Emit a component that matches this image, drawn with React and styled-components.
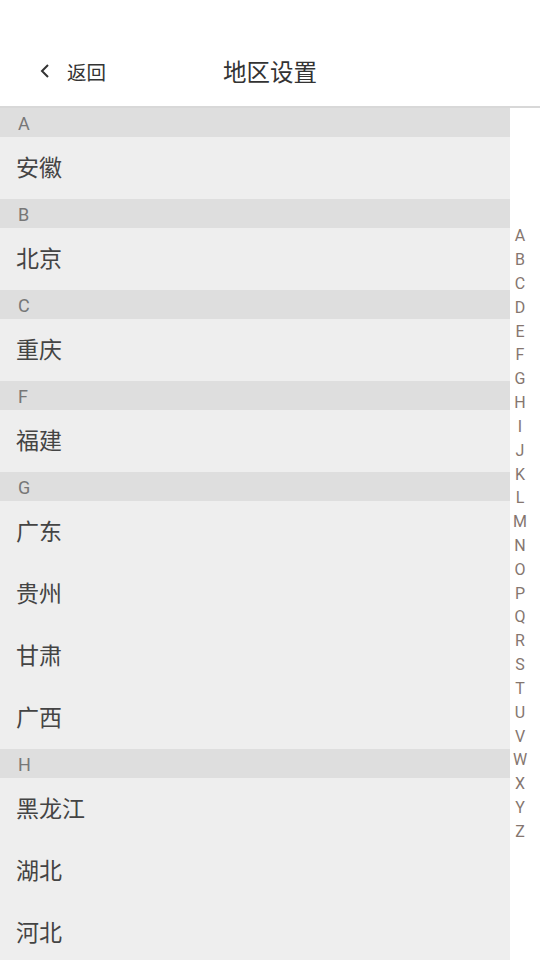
import React from 'react';
import styled, { createGlobalStyle } from 'styled-components';

const GlobalStyle = createGlobalStyle`
  html, body {
    margin: 0;
    padding: 0;
    background: #ffffff;
    font-family: Roboto, "Noto Sans CJK SC", sans-serif;
  }
`;

const Page = styled.div`
  width: 540px;
  height: 960px;
  display: flex;
  flex-direction: column;
  overflow: hidden;
  background: #fff;
`;

const Header = styled.header`
  position: relative;
  height: 66px;
  padding-top: 40px;
  display: flex;
  align-items: center;
  justify-content: center;
  border-bottom: 2px solid #d8d8d8;
  flex-shrink: 0;
`;

const BackButton = styled.div`
  position: absolute;
  left: 39px;
  top: 38px;
  height: 66px;
  display: flex;
  align-items: center;
  gap: 16px;
  color: #333;
  font-size: 19.5px;
`;

const Title = styled.h1`
  margin: 0 0 4px;
  font-size: 23.5px;
  font-weight: 400;
  color: #333;
`;

const Body = styled.div`
  flex: 1;
  display: flex;
  min-height: 0;
`;

const List = styled.div`
  width: 510px;
  background: #eeeeee;
  overflow: hidden;
`;

const SectionHead = styled.div`
  height: 29px;
  line-height: 31px;
  padding-left: 18px;
  background: #dedede;
  color: #777;
  font-size: 18px;
`;

const Item = styled.div`
  height: 62px;
  box-sizing: border-box;
  padding: 0 0 5px 16px;
  display: flex;
  align-items: center;
  color: #444;
  font-size: 23px;
`;

const IndexBar = styled.div`
  flex: 1;
  padding-right: 10px;
  display: flex;
  flex-direction: column;
  justify-content: center;
  align-items: center;
`;

const IndexLetter = styled.span`
  height: 23.84px;
  line-height: 23.84px;
  font-size: 16px;
  color: #85766f;
`;

const sections = [
  { letter: 'A', items: ['安徽'] },
  { letter: 'B', items: ['北京'] },
  { letter: 'C', items: ['重庆'] },
  { letter: 'F', items: ['福建'] },
  { letter: 'G', items: ['广东', '贵州', '甘肃', '广西'] },
  { letter: 'H', items: ['黑龙江', '湖北', '河北'] },
];

const letters = 'ABCDEFGHIJKLMNOPQRSTUVWXYZ'.split('');

const App = () => (
  <Page>
    <GlobalStyle />
    <Header>
      <BackButton>
        <svg width="12" height="16" viewBox="0 0 12 16">
          <path d="M9 2 L3 8 L9 14" fill="none" stroke="#333" strokeWidth="2" />
        </svg>
        <span>返回</span>
      </BackButton>
      <Title>地区设置</Title>
    </Header>
    <Body>
      <List>
        {sections.map((s) => (
          <React.Fragment key={s.letter}>
            <SectionHead>{s.letter}</SectionHead>
            {s.items.map((name) => (
              <Item key={name}>{name}</Item>
            ))}
          </React.Fragment>
        ))}
      </List>
      <IndexBar>
        {letters.map((l) => (
          <IndexLetter key={l}>{l}</IndexLetter>
        ))}
      </IndexBar>
    </Body>
  </Page>
);

export default App;
